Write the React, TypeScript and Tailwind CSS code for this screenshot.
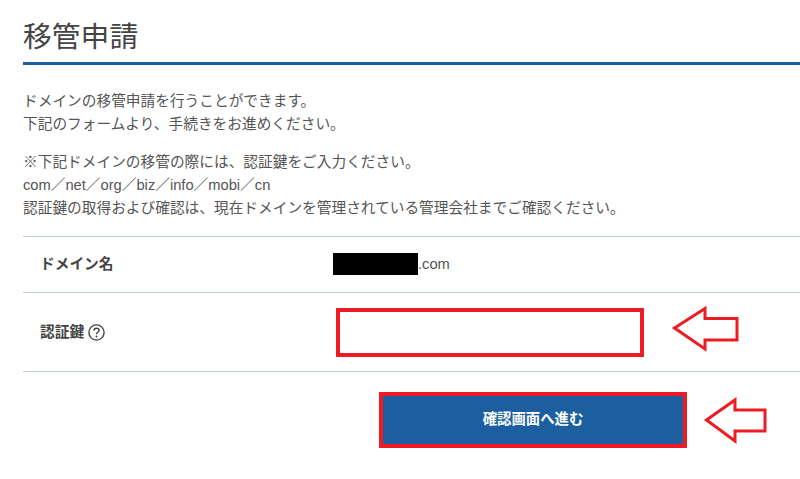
export default function App() {
  const font = "font-['Liberation_Sans','Noto_Sans_CJK_JP',sans-serif]";
  return (
    <div className={`${font} relative w-[800px] h-[479px] overflow-hidden bg-white pl-[23px] text-[#555]`}>
      <h1 className="h-[65px] border-b-[3px] border-[#1c5fa0] pt-[15px] text-[28.8px] leading-[44px] font-normal text-[#444]">移管申請</h1>
      <div className="pt-[25px] text-[14.7px] leading-[23px] text-[#555]">
        <p>ドメインの移管申請を行うことができます。<br />下記のフォームより、手続きをお進めください。</p>
        <p className="mt-[15px]">※下記ドメインの移管の際には、認証鍵をご入力ください。<br />com／net／org／biz／info／mobi／cn<br />認証鍵の取得および確認は、現在ドメインを管理されている管理会社までご確認ください。</p>
      </div>
      <div className="mt-[16px] border-t border-[#b9cde3] h-[56px] flex items-center">
        <div className="w-[310px] pl-[17px] text-[14.7px] font-bold text-[#444]">ドメイン名</div>
        <div className="flex items-center text-[14.7px] text-[#555]">
          <span className="w-[85px] h-[22px] bg-black" />
          <span>.com</span>
        </div>
      </div>
      <div className="border-t border-[#b9cde3] border-b h-[80px] flex items-center">
        <div className="w-[313px] pl-[17px] flex items-center gap-[4px] text-[14.7px] font-bold text-[#444]">
          認証鍵
          <svg width="17" height="17" viewBox="0 0 17 17" fill="none" className="mt-[1px]">
            <circle cx="8.5" cy="8.5" r="7.6" stroke="#444" strokeWidth="1.4" />
            <path d="M6 6.6c0-1.5 1.1-2.4 2.5-2.4s2.5.9 2.5 2.2c0 1.8-2.5 1.9-2.5 3.8" stroke="#444" strokeWidth="1.5" />
            <circle cx="8.5" cy="12.4" r="1" fill="#444" />
          </svg>
        </div>
        <div className="w-[308px] h-[49px] border-[4px] border-[#ed1c24] bg-white" />
      </div>
      <div className="pl-[356px] pt-[20px]">
        <button className="w-[308px] h-[56px] border-[4px] border-[#ed1c24] bg-[#1c5fa0] text-white text-[14.4px] font-bold">確認画面へ進む</button>
      </div>
      <svg className="absolute left-0 top-0 pointer-events-none" width="800" height="479" fill="none">
        <path d="M674.5 328L705 308.5V318.5H737V340H705V349Z" stroke="#ed1c24" strokeWidth="3" />
        <path d="M706.5 420L735 400V410H765V431H735V441Z" stroke="#ed1c24" strokeWidth="3" />
      </svg>
    </div>
  );
}
